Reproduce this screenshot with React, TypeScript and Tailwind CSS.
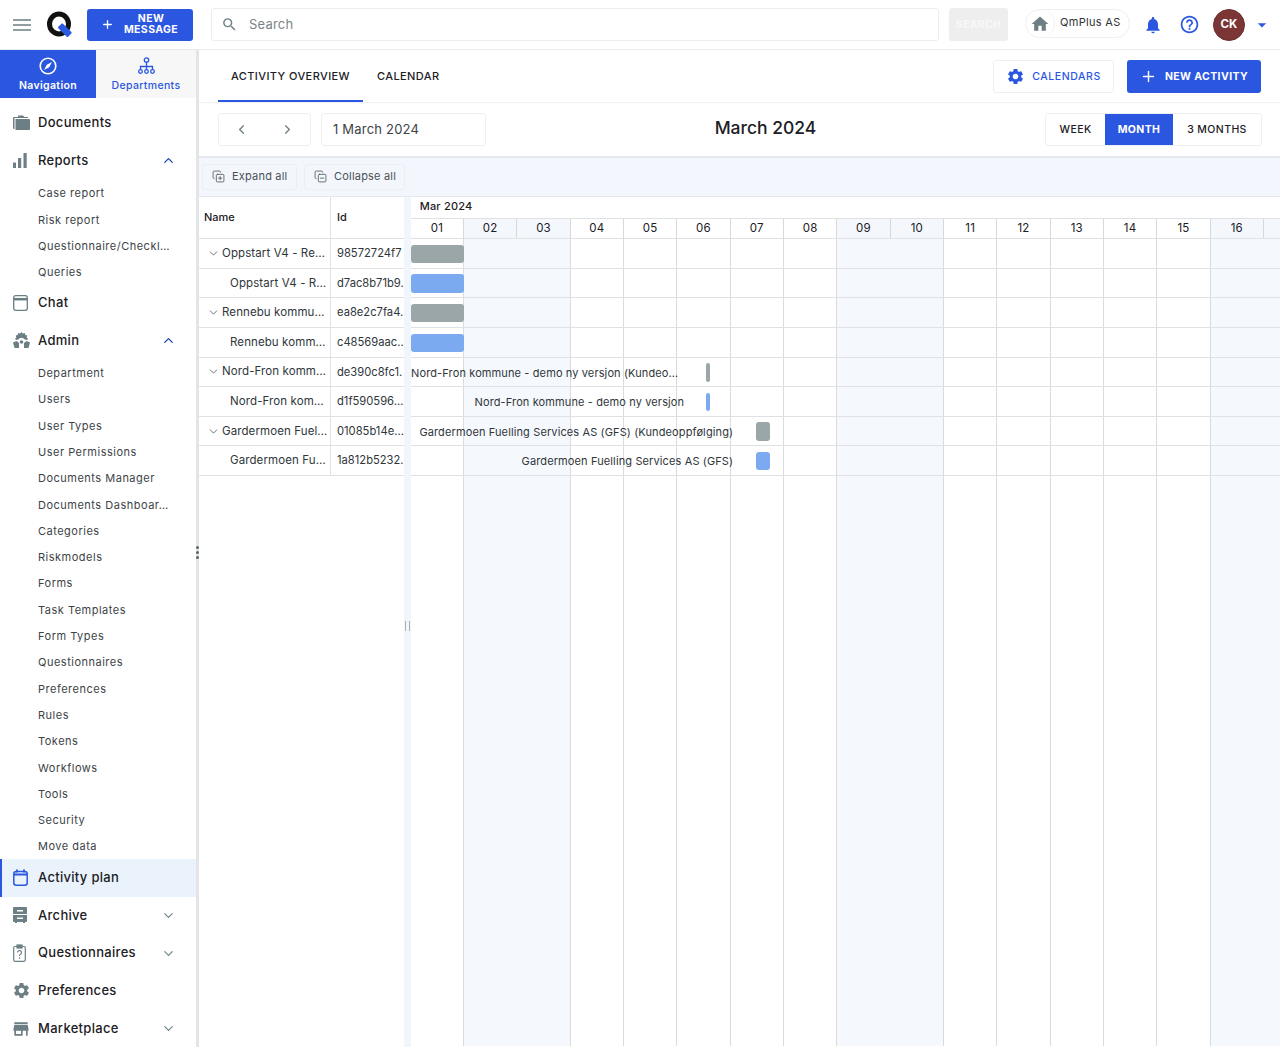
import { ChevronDown, ChevronLeft, ChevronRight, ChevronUp, CopyMinus, CopyPlus, Plus } from "lucide-react";
import { MdArrowDropDown, MdHelpOutline, MdHome, MdNotifications, MdSearch, MdSettings, MdStore } from "react-icons/md";

const FONT = "font-['Inter',sans-serif]";

const DAYS = ["01", "02", "03", "04", "05", "06", "07", "08", "09", "10", "11", "12", "13", "14", "15", "16", ""];
const WEEKEND = [1, 2, 8, 9, 15, 16];

const reports = ["Case report", "Risk report", "Questionnaire/Checkl…", "Queries"];
const admin = [
  "Department",
  "Users",
  "User Types",
  "User Permissions",
  "Documents Manager",
  "Documents Dashboar…",
  "Categories",
  "Riskmodels",
  "Forms",
  "Task Templates",
  "Form Types",
  "Questionnaires",
  "Preferences",
  "Rules",
  "Tokens",
  "Workflows",
  "Tools",
  "Security",
  "Move data",
];

type TRow = {
  name: string;
  id: string;
  parent: boolean;
  barLeft: number;
  barWidth: number;
  label?: string;
  labelEnd?: number;
};

const rows: TRow[] = [
  { name: "Oppstart V4 - Re…", id: "98572724f7", parent: true, barLeft: 0, barWidth: 53.3 },
  { name: "Oppstart V4 - R…", id: "d7ac8b71b9.", parent: false, barLeft: 0, barWidth: 53.3 },
  { name: "Rennebu kommu…", id: "ea8e2c7fa4.", parent: true, barLeft: 0, barWidth: 53.3 },
  { name: "Rennebu komm…", id: "c48569aac..", parent: false, barLeft: 0, barWidth: 53.3 },
  { name: "Nord-Fron komm…", id: "de390c8fc1.", parent: true, barLeft: 295.5, barWidth: 4, label: "Nord-Fron kommune - demo ny versjon (Kundeo…", labelEnd: 267.5 },
  { name: "Nord-Fron kom…", id: "d1f590596…", parent: false, barLeft: 295.5, barWidth: 4, label: "Nord-Fron kommune - demo ny versjon", labelEnd: 273.5 },
  { name: "Gardermoen Fuel…", id: "01085b14e…", parent: true, barLeft: 345.5, barWidth: 14, label: "Gardermoen Fuelling Services AS (GFS) (Kundeoppfølging)", labelEnd: 322.5 },
  { name: "Gardermoen Fu…", id: "1a812b5232.", parent: false, barLeft: 345.5, barWidth: 14, label: "Gardermoen Fuelling Services AS (GFS)", labelEnd: 322.5 },
];

const Logo = () => (
  <svg width="27" height="28" viewBox="0 0 27 28">
    <ellipse cx="12" cy="13" rx="9.5" ry="10" fill="none" stroke="#111" strokeWidth="5" />
    <rect x="11" y="16" width="14" height="6.500" rx="1" transform="rotate(45 18 19)" fill="#2c5ae0" />
  </svg>
);

const MenuIcon = () => (
  <svg width="18" height="12" viewBox="0 0 18 12" stroke="#6b7f85" strokeWidth="1.300">
    <path d="M0 1h18M0 6h18M0 11h18" />
  </svg>
);

const CompassIcon = () => (
  <svg width="18" height="18" viewBox="0 0 18 18">
    <circle cx="9" cy="9" r="7.800" fill="none" stroke="#fff" strokeWidth="1.600" />
    <path d="M13 5L10.200 10.200 5 13l2.800-5.200z" fill="#fff" />
  </svg>
);

const DepartmentsIcon = () => (
  <svg width="17" height="18" viewBox="0 0 17 18" fill="none" stroke="#2b57e0" strokeWidth="1.300">
    <circle cx="8.500" cy="3" r="2.200" />
    <circle cx="2.500" cy="14.500" r="1.800" />
    <circle cx="8.500" cy="14.500" r="1.800" />
    <circle cx="14.500" cy="14.500" r="1.800" />
    <path d="M8.500 5.200v7.500M2.500 12.700V9.500h12v3.200" />
  </svg>
);

const FolderIcon = () => (
  <svg width="17" height="15" viewBox="0 0 17 15" fill="#6b7f85">
    <path d="M0 3a1 1 0 0 1 1-1h14v1H1.500v11H1a1 1 0 0 1-1-1z" />
    <path d="M2.500 4h13.500a1 1 0 0 1 1 1v9a1 1 0 0 1-1 1H2.500zM5 0.500h5L11.500 2H5z" />
  </svg>
);

const BarsIcon = () => (
  <svg width="14" height="15" viewBox="0 0 14 15" fill="#6b7f85">
    <rect x="0" y="9.500" width="3" height="5.500" rx=".6" />
    <rect x="5" y="5" width="3.200" height="10" rx=".6" />
    <rect x="10.500" y="0" width="3.200" height="15" rx=".6" />
  </svg>
);

const AdminIcon = () => (
  <svg width="17" height="16" viewBox="0 0 17 16" fill="#6b7f85">
    <path d="M8.500 0l1.300 1.600 2-.6.500 2 2 .5-.6 2L15 6.800l-1 1.200-2.200-.5a4 4 0 0 0-6.600 0L3 8 2 6.800l1.300-1.300-.6-2 2-.5.500-2 2 .6z" />
    <path d="M0 10.500l3.500-1.500 2.500 2v5H1.500zM17 10.500L13.500 9 11 11v5h4.500z" />
    <circle cx="8.500" cy="10" r="1.800" />
  </svg>
);

const ChatIcon = () => (
  <svg width="15" height="16" viewBox="0 0 15 16" fill="none" stroke="#6b7f85" strokeWidth="1.300">
    <rect x=".7" y=".7" width="13.600" height="14.600" rx="2" />
    <path d="M1 4.200h13" strokeWidth="2.500" />
  </svg>
);

const ArchiveIcon = () => (
  <svg width="14" height="16" viewBox="0 0 14 16" fill="#6b7f85">
    <path d="M0 1a1 1 0 0 1 1-1h12a1 1 0 0 1 1 1v6H0zM0 8h14v6a1 1 0 0 1-1 1H1a1 1 0 0 1-1-1zM2 15h2v1H2zM10 15h2v1h-2z" />
    <path d="M4 3h6v1.400H4zM4 10.500h6v1.400H4z" fill="#fff" />
  </svg>
);

const ClipboardQuestion = () => (
  <svg width="13" height="18" viewBox="0 0 13 18" fill="none" stroke="#6b7f85" strokeWidth="1.200">
    <rect x=".7" y="2.500" width="11.600" height="14.800" rx="1.200" />
    <rect x="4" y="1" width="5" height="3" fill="#6b7f85" />
    <path d="M4.500 8.500a2 2 0 1 1 3 1.800c-.7.400-1 .8-1 1.700M6.500 13.300v1.400" />
  </svg>
);

const CalendarIcon = () => (
  <svg width="15" height="17" viewBox="0 0 15 17" fill="none" stroke="#2b57e0" strokeWidth="1.500">
    <rect x=".8" y="2.500" width="13.400" height="13.700" rx="2.500" />
    <path d="M1 5.500h13M4 .5v3M11 .5v3" strokeWidth="1.800" />
  </svg>
);

const NavItem = ({ icon, label, chevron, active }: { icon: React.ReactNode; label: string; chevron?: "up" | "down"; active?: boolean }) => (
  <div className={`flex h-[37.750px] shrink-0 items-center pr-[20px] ${active ? "border-l-2 border-[#2b57e0] bg-[#eaf3fc] pl-[11px]" : "pl-[13px]"}`}>
    <span className="flex w-[25px] shrink-0 items-center justify-start">{icon}</span>
    <span className="flex-1 text-[13px] font-medium tracking-[0.3px] text-[#1c2024]">{label}</span>
    {chevron === "up" && <ChevronUp size={15} strokeWidth={2} className="text-[#1a3fb0]" />}
    {chevron === "down" && <ChevronDown size={15} strokeWidth={1.800} className="text-[#6b7f85]" />}
  </div>
);

const SubItem = ({ label }: { label: string }) => (
  <div className="flex h-[26.300px] shrink-0 items-center pl-[38px] text-[11px] tracking-[0.5px] text-[#3c4347]">{label}</div>
);

const Sidebar = () => (
  <aside className="relative flex w-[199px] shrink-0 flex-col overflow-hidden border-r-[3px] border-[#e3e6e8]">
    <div className="flex h-[48px] shrink-0">
      <div className="flex w-[96px] flex-col items-center justify-center gap-[3px] bg-[#2b57e0] pt-[2px] text-white">
        <CompassIcon />
        <span className="text-[10.500px] font-semibold tracking-[0.35px]">Navigation</span>
      </div>
      <div className="flex flex-1 flex-col items-center justify-center gap-[3px] bg-[#f7f7f7] pt-[2px] text-[#2b57e0]">
        <DepartmentsIcon />
        <span className="text-[10.500px] font-medium tracking-[0.35px]">Departments</span>
      </div>
    </div>
    <div className="flex flex-col pt-[6px]">
      <NavItem icon={<FolderIcon />} label="Documents" />
      <NavItem icon={<BarsIcon />} label="Reports" chevron="up" />
      <div className="-mb-[2px] flex flex-col pt-[1px]">
        {reports.map((r) => (
          <SubItem key={r} label={r} />
        ))}
      </div>
      <NavItem icon={<ChatIcon />} label="Chat" />
      <NavItem icon={<AdminIcon />} label="Admin" chevron="up" />
      <div className="-mb-[1px] flex flex-col pt-[1px]">
        {admin.map((a) => (
          <SubItem key={a} label={a} />
        ))}
      </div>
      <NavItem active icon={<CalendarIcon />} label="Activity plan" />
      <NavItem icon={<ArchiveIcon />} label="Archive" chevron="down" />
      <NavItem icon={<ClipboardQuestion />} label="Questionnaires" chevron="down" />
      <NavItem icon={<MdSettings size={19} color="#6b7f85" className="-ml-[1px]" />} label="Preferences" />
      <NavItem icon={<MdStore size={20} color="#6b7f85" className="-ml-[2px]" />} label="Marketplace" chevron="down" />
    </div>
  </aside>
);

const Header = () => (
  <header className="relative flex h-[50px] shrink-0 items-center border-b border-[#e8eaec] bg-white pl-[13px]">
    <MenuIcon />
    <span className="ml-[16px] flex w-[27px]">
      <Logo />
    </span>
    <button className="ml-[13px] flex h-[32px] w-[106px] items-center rounded-[3px] bg-[#2b57e0] pl-[14px] text-white">
      <Plus size={13} strokeWidth={2.400} />
      <span className="flex-1 pr-[5px] text-center text-[10.500px] font-bold leading-[10.500px] tracking-[0.4px]">
        NEW
        <br />
        MESSAGE
      </span>
    </button>
    <div className="ml-[18px] flex h-[33px] w-[728px] items-center rounded-[3px] border border-[#ebedef] pl-[9px]">
      <MdSearch size={17} color="#6b7f85" />
      <span className="ml-[11px] text-[13px] tracking-[0.2px] text-[#7c8487]">Search</span>
    </div>
    <div className="ml-[10px] flex h-[33px] w-[59px] items-center justify-center rounded-[3px] bg-[#eeeeee] text-[10.500px] font-bold tracking-[0.3px] text-[#f8f8f8]">
      SEARCH
    </div>
    <div className="ml-[17px] mb-[2px] flex h-[29px] w-[105px] items-center rounded-full border border-[#eeeff1]">
      <span className="flex h-[27px] w-[29px] items-center justify-center rounded-full border-r border-[#eeeff1]">
        <MdHome size={20} color="#6b7f85" />
      </span>
      <span className="ml-[5px] pb-[3px] text-[11px] tracking-[0.3px] text-[#2f3437]">QmPlus AS</span>
    </div>
    <MdNotifications size={20} color="#2b57e0" className="ml-[13px]" />
    <MdHelpOutline size={21} color="#2b57e0" className="ml-[16px]" />
    <div className="ml-[13px] flex h-[32px] w-[32px] items-center justify-center rounded-full border border-[#6f2e2e] bg-[#7c3535] text-[11.500px] font-bold tracking-[0.2px] text-white">
      CK
    </div>
    <MdArrowDropDown size={20} color="#2b57e0" className="ml-[7px]" />
  </header>
);

const Gantt = () => (
  <div className="relative min-w-0 flex-1 overflow-hidden">
    <div className="flex h-[21.300px] items-center pb-[3px] pl-[9px] text-[11px] font-medium tracking-[0.2px] text-[#1c2024]">Mar 2024</div>
    <div className="flex h-[21px] border-b border-t border-[#dfe2e4]">
      {DAYS.map((d, i) => (
        <div
          key={i}
          className={`flex w-[53.330px] shrink-0 items-center justify-center border-r border-[#d5d9db] text-[11.500px] tracking-[0.2px] text-[#1c2024] ${WEEKEND.includes(i) ? "bg-[#f4f8fd]" : "bg-white"}`}
        >
          {d}
        </div>
      ))}
    </div>
    <div className="relative h-[807px]">
      {/* day columns behind the bars */}
      <div className="absolute inset-0 flex">
        {DAYS.map((d, i) => (
          <div
            key={i}
            className={`w-[53.330px] shrink-0 ${WEEKEND.includes(i) ? "bg-[#f5f9fe]" : ""} ${i === 1 || i === 8 || i === 15 ? "" : "border-r border-[#d9dcde]"}`}
          />
        ))}
      </div>
      <div className="relative flex flex-col">
        {rows.map((r) => (
          <div key={r.id} className="relative h-[29.600px] border-b border-[#dfe2e4]">
            {r.label && (
              <span
                className="absolute top-[7px] whitespace-nowrap text-[11px] tracking-[0.12px] text-[#30363a]"
                style={{ right: `calc(100% - ${r.labelEnd}px)` }}
              >
                {r.label}
              </span>
            )}
            <div
              className={`absolute top-[5.500px] h-[18.500px] rounded-[3px] ${r.parent ? "bg-[#9aa6a8]" : "bg-[#7caaf0]"}`}
              style={{ left: r.barLeft, width: r.barWidth }}
            />
          </div>
        ))}
      </div>
    </div>
  </div>
);

const Table = () => (
  <div className="flex w-[205px] shrink-0 flex-col">
    <div className="flex h-[42.300px] shrink-0 border-b border-[#dfe2e4] text-[11px] font-medium text-[#1c2024]">
      <div className="flex w-[132px] shrink-0 items-center border-r border-[#dfe2e4] pl-[5px]">Name</div>
      <div className="flex flex-1 items-center pl-[6px]">Id</div>
    </div>
    {rows.map((r) => (
      <div key={r.id} className="flex h-[29.600px] shrink-0 border-b border-[#dfe2e4] text-[11.500px] text-[#30363a]">
        <div className={`flex w-[132px] shrink-0 items-center whitespace-nowrap border-r border-[#dfe2e4] tracking-[0.1px] ${r.parent ? "pl-[8px]" : "pl-[31px]"}`}>
          {r.parent && <ChevronDown size={13} strokeWidth={1.500} className="mr-[2px] shrink-0 text-[#4a5154]" />}
          {r.name}
        </div>
        <div className="flex flex-1 items-center whitespace-nowrap pl-[6px] text-[11.200px]">{r.id}</div>
      </div>
    ))}
  </div>
);

const App = () => (
  <div className={`flex h-[1047px] w-[1280px] flex-col overflow-hidden bg-white ${FONT}`}>
    <Header />
    <div className="relative flex min-h-0 flex-1">
      <Sidebar />
      {/* sidebar resize handle */}
      <div className="absolute left-[195.500px] top-[496px] flex flex-col gap-[2px]">
        <span className="h-[3px] w-[3px] rounded-full bg-[#5a6468]" />
        <span className="h-[3px] w-[3px] rounded-full bg-[#5a6468]" />
        <span className="h-[3px] w-[3px] rounded-full bg-[#5a6468]" />
      </div>
      <main className="flex min-w-0 flex-1 flex-col">
        <div className="flex h-[53px] shrink-0 items-center border-b border-[#f0f1f2] pl-[19px] pr-[19px]">
          <div className="relative flex h-full w-[145px] items-center justify-center text-[11px] font-medium tracking-[0.4px] text-[#1c2024]">
            ACTIVITY OVERVIEW
            <span className="absolute inset-x-0 bottom-0 h-[2px] bg-[#2b57e0]" />
          </div>
          <div className="ml-[14px] text-[11px] font-medium tracking-[0.4px] text-[#1c2024]">CALENDAR</div>
          <button className="ml-auto flex h-[33px] w-[121px] items-center justify-center gap-[7px] rounded-[3px] border border-[#eeeff1] text-[10.500px] font-medium tracking-[0.6px] text-[#2b57e0]">
            <MdSettings size={19} color="#2b57e0" />
            <span className="pt-[1px]">CALENDARS</span>
          </button>
          <button className="ml-[13px] flex h-[33px] w-[134px] items-center justify-center gap-2 rounded-[3px] bg-[#2b57e0] text-[10.500px] font-bold tracking-[0.4px] text-white">
            <Plus size={17} strokeWidth={2} />
            <span className="pt-[1px]">NEW ACTIVITY</span>
          </button>
        </div>
        <div className="flex h-[55px] shrink-0 items-center border-b-2 border-[#e3e8ee] pl-[19px] pr-[18px]">
          <div className="flex h-[33px] w-[93px] items-center justify-around rounded-[3px] border border-[#eeeff1] text-[#6b7f85]">
            <ChevronLeft size={15} strokeWidth={2} />
            <ChevronRight size={15} strokeWidth={2} />
          </div>
          <div className="ml-[10px] flex h-[33px] w-[165px] items-center rounded-[3px] border border-[#eeeff1] pl-[11px] text-[13px] tracking-[0.2px] text-[#3c4347]">
            1 March 2024
          </div>
          <div className="flex-1 pb-[2px] text-center text-[17.500px] font-medium text-[#1c2024]">March 2024</div>
          <div className="flex h-[33px] w-[217px] rounded-[3px] border border-[#eeeff1] text-[10.500px] font-medium tracking-[0.4px] text-[#1c2024]">
            <div className="flex w-[59px] items-center justify-center">WEEK</div>
            <div className="flex w-[68px] items-center justify-center bg-[#2b57e0] font-bold text-white">MONTH</div>
            <div className="flex flex-1 items-center justify-center">3 MONTHS</div>
          </div>
        </div>
        <div className="flex h-[39px] shrink-0 items-center gap-[7px] border-b border-[#e3e8ee] bg-[#f3f7fd] pb-[1px] pl-[3px] text-[11px] tracking-[0.2px] text-[#4a5154]">
          <div className="flex h-[26px] w-[95px] items-center gap-[7px] rounded-[3px] border border-[#ecf0f5] pl-[9px]">
            <CopyPlus size={13} strokeWidth={1.500} />
            Expand all
          </div>
          <div className="flex h-[26px] w-[101px] items-center gap-[7px] rounded-[3px] border border-[#ecf0f5] pl-[9px]">
            <CopyMinus size={13} strokeWidth={1.500} />
            Collapse all
          </div>
        </div>
        <div className="flex min-h-0 flex-1">
          <Table />
          <div className="relative w-[6.700px] shrink-0 bg-[#f1f6fc]">
            <span className="absolute left-[1px] top-[424px] h-[10px] w-[5px] border-x border-[#a9b0b4]" />
          </div>
          <Gantt />
        </div>
      </main>
    </div>
  </div>
);

export default App;
